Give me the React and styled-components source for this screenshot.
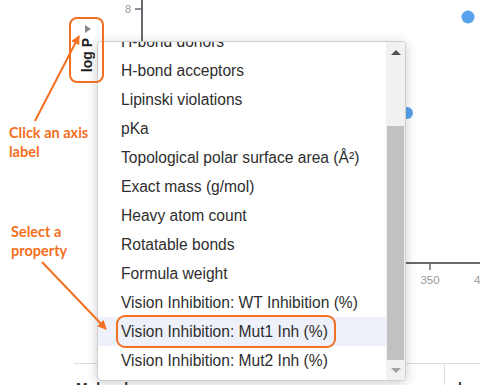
import React from "react";
import styled, { createGlobalStyle } from "styled-components";

const ORANGE = "#f36f21";
const AXIS = "#676b70";

const Global = createGlobalStyle`
  html, body { margin: 0; padding: 0; background: #fff; }
  body { font-family: "Liberation Sans", Arial, sans-serif; }
  * { box-sizing: border-box; }
`;

const Page = styled.div`
  position: relative;
  width: 480px;
  height: 385px;
  overflow: hidden;
  background: #fff;
`;

const Chart = styled.div`
  height: 363px;
`;

const ChartSvg = styled.svg`
  display: block;
`;

const TableHead = styled.div`
  display: grid;
  grid-template-columns: 371px 1fr;
  margin-left: 74px;
  border-top: 1px solid #dedede;
`;

const HeadCell = styled.div`
  height: 22px;
  padding: 16px 0 0 ${(p) => p.$pad}px;
  font-size: 14px;
  font-weight: bold;
  line-height: 17px;
  color: #333;
  white-space: nowrap;
  overflow: hidden;
  border-right: ${(p) => (p.$divider ? "1px solid #dedede" : "none")};
`;

const AxisButton = styled.button`
  position: absolute;
  left: 69px;
  top: 17px;
  z-index: 2;
  width: 35px;
  height: 66px;
  margin: 0;
  padding: 6px 0 0;
  border: 2px solid ${ORANGE};
  border-radius: 8px;
  background: transparent;
  display: flex;
  flex-direction: column;
  align-items: center;
  gap: 5px;
  cursor: pointer;
`;

const Caret = styled.span`
  width: 0;
  height: 0;
  margin-left: 3px;
  border-left: 6px solid #8a8a8a;
  border-top: 4px solid transparent;
  border-bottom: 4px solid transparent;
`;

const AxisText = styled.span`
  writing-mode: vertical-rl;
  transform: rotate(180deg);
  font-family: "Liberation Sans", Arial, sans-serif;
  font-size: 14px;
  font-weight: bold;
  line-height: 16px;
  color: #222;
`;

const Menu = styled.div`
  position: absolute;
  left: 97px;
  top: 41px;
  z-index: 1;
  width: 309px;
  height: 340px;
  display: flex;
  overflow: hidden;
  background: #fff;
  border: 1px solid #cfcfcf;
  border-radius: 4px;
  box-shadow: 0 2px 12px rgba(0, 0, 0, 0.2);
`;

const List = styled.div`
  flex: 1;
  overflow: hidden;
`;

const Items = styled.div`
  margin-top: ${(p) => -p.$offset}px;
`;

const Item = styled.div`
  height: 29px;
  display: flex;
  align-items: center;
  padding-left: 23px;
  font-size: 15.6px;
  color: #2e2e2e;
  white-space: nowrap;
  background: ${(p) => (p.$active ? "#eef1f9" : "transparent")};
`;

const Ringed = styled.span`
  position: relative;
  line-height: 18px;
  &::after {
    content: "";
    position: absolute;
    left: -5px;
    right: -8px;
    top: -8px;
    bottom: -7px;
    border: 2px solid ${ORANGE};
    border-radius: 9px;
  }
`;

const Scrollbar = styled.div`
  width: 19px;
  flex: none;
  display: flex;
  flex-direction: column;
  background: #f1f1f1;
`;

const ScrollBtn = styled.div`
  height: 20px;
  flex: none;
  display: flex;
  align-items: center;
  justify-content: center;
`;

const Arrow = styled.span`
  width: 0;
  height: 0;
  border-left: 5px solid transparent;
  border-right: 5px solid transparent;
  ${(p) =>
    p.$dir === "up"
      ? `border-bottom: 5px solid ${p.$color};`
      : `border-top: 5px solid ${p.$color};`}
`;

const Track = styled.div`
  flex: 1;
  padding: 0 1px;
`;

const Thumb = styled.div`
  margin-top: ${(p) => p.$top}px;
  height: ${(p) => p.$size}px;
  background: #c1c1c1;
`;

const Overlay = styled.svg`
  position: absolute;
  left: 0;
  top: 0;
  z-index: 3;
  pointer-events: none;
`;

const Note = styled.div`
  position: absolute;
  left: ${(p) => p.$x}px;
  top: ${(p) => p.$y}px;
  z-index: 3;
  font-family: Lato, "Liberation Sans", sans-serif;
  font-size: 14.5px;
  font-weight: 700;
  line-height: 19px;
  color: ${ORANGE};
`;

const properties = [
  "H-bond donors",
  "H-bond acceptors",
  "Lipinski violations",
  "pKa",
  "Topological polar surface area (Å²)",
  "Exact mass (g/mol)",
  "Heavy atom count",
  "Rotatable bonds",
  "Formula weight",
  "Vision Inhibition: WT Inhibition (%)",
  "Vision Inhibition: Mut1 Inh (%)",
  "Vision Inhibition: Mut2 Inh (%)",
];

const ACTIVE = "Vision Inhibition: Mut1 Inh (%)";

function ScatterChart() {
  return (
    <Chart>
      <ChartSvg width="480" height="363" viewBox="0 0 480 363">
        <line x1="142" y1="0" x2="142" y2="264" stroke={AXIS} strokeWidth="2" />
        <line x1="135" y1="9" x2="141" y2="9" stroke={AXIS} strokeWidth="1.5" />
        <text x="131" y="13" textAnchor="end" fontSize="11" fill="#9a9a9a" fontFamily="Liberation Sans, Arial, sans-serif">8</text>
        <line x1="141" y1="263" x2="480" y2="263" stroke={AXIS} strokeWidth="2" />
        <line x1="430" y1="264" x2="430" y2="270" stroke={AXIS} strokeWidth="1.5" />
        <text x="430" y="284" textAnchor="middle" fontSize="11.5" fill="#9a9a9a" fontFamily="Liberation Sans, Arial, sans-serif">350</text>
        <text x="474" y="284" textAnchor="start" fontSize="11.5" fill="#9a9a9a" fontFamily="Liberation Sans, Arial, sans-serif">400</text>
        <circle cx="468" cy="17" r="6.5" fill="#59a3ee" />
        <circle cx="407" cy="113" r="6" fill="#59a3ee" />
        <circle cx="401" cy="126" r="5" fill="#59a3ee" />
        <circle cx="401" cy="139" r="5" fill="#59a3ee" />
        <circle cx="400" cy="176" r="5" fill="#59a3ee" />
      </ChartSvg>
    </Chart>
  );
}

function PropertyMenu() {
  return (
    <Menu>
      <List>
        <Items $offset={15}>
          {properties.map((name) => (
            <Item key={name} $active={name === ACTIVE}>
              {name === ACTIVE ? <Ringed>{name}</Ringed> : name}
            </Item>
          ))}
        </Items>
      </List>
      <Scrollbar>
        <ScrollBtn>
          <Arrow $dir="up" $color="#505050" />
        </ScrollBtn>
        <Track>
          <Thumb $top={64} $size={234} />
        </Track>
        <ScrollBtn>
          <Arrow $dir="down" $color="#a3a3a3" />
        </ScrollBtn>
      </Scrollbar>
    </Menu>
  );
}

function Callouts() {
  return (
    <>
      <Overlay width="480" height="385" viewBox="0 0 480 385">
        <defs>
          <marker id="head" viewBox="0 0 10 10" refX="9" refY="5" markerWidth="4.5" markerHeight="4.5" orient="auto">
            <path d="M0 0 L10 5 L0 10 Z" fill={ORANGE} />
          </marker>
        </defs>
        <line x1="35" y1="121" x2="79" y2="36" stroke={ORANGE} strokeWidth="2" markerEnd="url(#head)" />
        <line x1="42" y1="262" x2="106" y2="329" stroke={ORANGE} strokeWidth="2" markerEnd="url(#head)" />
      </Overlay>
      <Note $x={9} $y={123}>
        Click an axis
        <br />
        label
      </Note>
      <Note $x={11} $y={222}>
        Select a
        <br />
        property
      </Note>
    </>
  );
}

export default function App() {
  return (
    <>
      <Global />
      <Page>
        <ScatterChart />
        <TableHead>
          <HeadCell $pad={2} $divider>Molecule</HeadCell>
          <HeadCell $pad={13}>log P</HeadCell>
        </TableHead>
        <AxisButton type="button">
          <Caret />
          <AxisText>log P</AxisText>
        </AxisButton>
        <PropertyMenu />
        <Callouts />
      </Page>
    </>
  );
}
